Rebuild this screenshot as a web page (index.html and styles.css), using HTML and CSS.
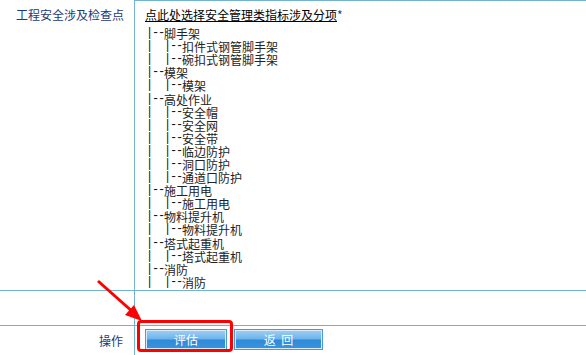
FILE: index.html
```html
<!DOCTYPE html>
<html>
<head>
<meta charset="utf-8">
<link rel="stylesheet" href="styles.css">
</head>
<body>
<div class="form">
  <div class="row row-main">
    <div class="label label-top">工程安全涉及检查点</div>
    <div class="cell cell-top">
      <div class="title"><span class="link">点此处选择安全管理类指标涉及分项</span><span class="star">*</span></div>
      <div class="tree">
        <div class="ln"><span class="p">|--</span><span>脚手架</span></div>
        <div class="ln"><span class="p">|  |--</span><span>扣件式钢管脚手架</span></div>
        <div class="ln"><span class="p">|  |--</span><span>碗扣式钢管脚手架</span></div>
        <div class="ln"><span class="p">|--</span><span>模架</span></div>
        <div class="ln"><span class="p">|  |--</span><span>模架</span></div>
        <div class="ln"><span class="p">|--</span><span>高处作业</span></div>
        <div class="ln"><span class="p">|  |--</span><span>安全帽</span></div>
        <div class="ln"><span class="p">|  |--</span><span>安全网</span></div>
        <div class="ln"><span class="p">|  |--</span><span>安全带</span></div>
        <div class="ln"><span class="p">|  |--</span><span>临边防护</span></div>
        <div class="ln"><span class="p">|  |--</span><span>洞口防护</span></div>
        <div class="ln"><span class="p">|  |--</span><span>通道口防护</span></div>
        <div class="ln"><span class="p">|--</span><span>施工用电</span></div>
        <div class="ln"><span class="p">|  |--</span><span>施工用电</span></div>
        <div class="ln"><span class="p">|--</span><span>物料提升机</span></div>
        <div class="ln"><span class="p">|  |--</span><span>物料提升机</span></div>
        <div class="ln"><span class="p">|--</span><span>塔式起重机</span></div>
        <div class="ln"><span class="p">|  |--</span><span>塔式起重机</span></div>
        <div class="ln"><span class="p">|--</span><span>消防</span></div>
        <div class="ln"><span class="p">|  |--</span><span>消防</span></div>
      </div>
    </div>
  </div>
  <div class="row row-empty">
    <div class="label"></div>
    <div class="cell"></div>
  </div>
  <div class="row row-actions">
    <div class="label label-act">操作</div>
    <div class="cell cell-act">
      <button class="btn btn-eval">评估</button>
      <button class="btn btn-back">返&nbsp;&nbsp;回</button>
    </div>
  </div>
</div>
<div class="highlight"></div>
<svg class="arrow" width="60" height="50" viewBox="0 0 60 50">
  <line x1="2" y1="2" x2="38" y2="34" stroke="#ff0000" stroke-width="3"/>
  <polygon points="46,42 29,36 38,26" fill="#ff0000"/>
</svg>
</body>
</html>
```

FILE: styles.css
```css
html, body {
  margin: 0;
  padding: 0;
  background: #ffffff;
}
body {
  font-family: "Noto Sans CJK SC", "Liberation Sans", sans-serif;
  font-size: 12px;
  color: #222;
  position: relative;
  width: 586px;
  height: 355px;
  overflow: hidden;
}
.form {
  display: flex;
  flex-direction: column;
}
.row {
  display: grid;
  grid-template-columns: 134px 1fr;
  border-bottom: 1px solid #72b3d2;
}
.row-main { height: 290px; }
.row-empty { height: 34px; }
.row-actions { height: 40px; border-bottom: none; }
.label {
  text-align: right;
  padding-right: 10px;
  color: #1c3a78;
  font-size: 12px;
}
.label-top {
  padding-top: 8px;
  line-height: 14px;
}
.label-act {
  padding-top: 8px;
  line-height: 14px;
  padding-right: 11px;
}
.cell {
  border-left: 1px solid #72b3d2;
}
.cell-top {
  border-top: 1px solid #72b3d2;
  padding-left: 10px;
  overflow: hidden;
}
.title {
  margin-top: 7px;
  line-height: 14px;
  color: #000;
}
.link { text-decoration: underline; }
.star { color: #1c3a98; }
.tree {
  margin-top: 5px;
  margin-left: 1px;
  color: #222;
}
.ln {
  display: flex;
  align-items: center;
  height: 13.1px;
  line-height: 13px;
  white-space: nowrap;
}
.p {
  font-family: "Liberation Mono", monospace;
  font-size: 12px;
  letter-spacing: -1.2px;
  white-space: pre;
  color: #111;
}
.cell-act {
  display: flex;
  gap: 7px;
  padding-left: 10px;
  padding-top: 3px;
  align-items: flex-start;
}
.btn {
  height: 21px;
  padding: 0;
  border: 1px solid #4a9ad8;
  box-shadow: inset 0 0 0 1px #d6ebfb;
  background: linear-gradient(#a2d0f3 0%, #6cb2ea 48%, #2f8ad8 52%, #3a93de 100%);
  color: #fff;
  font-family: "Noto Sans CJK SC", "Liberation Sans", sans-serif;
  font-size: 12px;
  line-height: 17px;
}
.btn-eval { width: 82px; }
.btn-back { width: 89px; }
.highlight {
  position: absolute;
  left: 137px;
  top: 320px;
  width: 90px;
  height: 26px;
  border: 3px solid #ff0000;
  border-radius: 4px;
}
.arrow {
  position: absolute;
  left: 96px;
  top: 279px;
}
```
